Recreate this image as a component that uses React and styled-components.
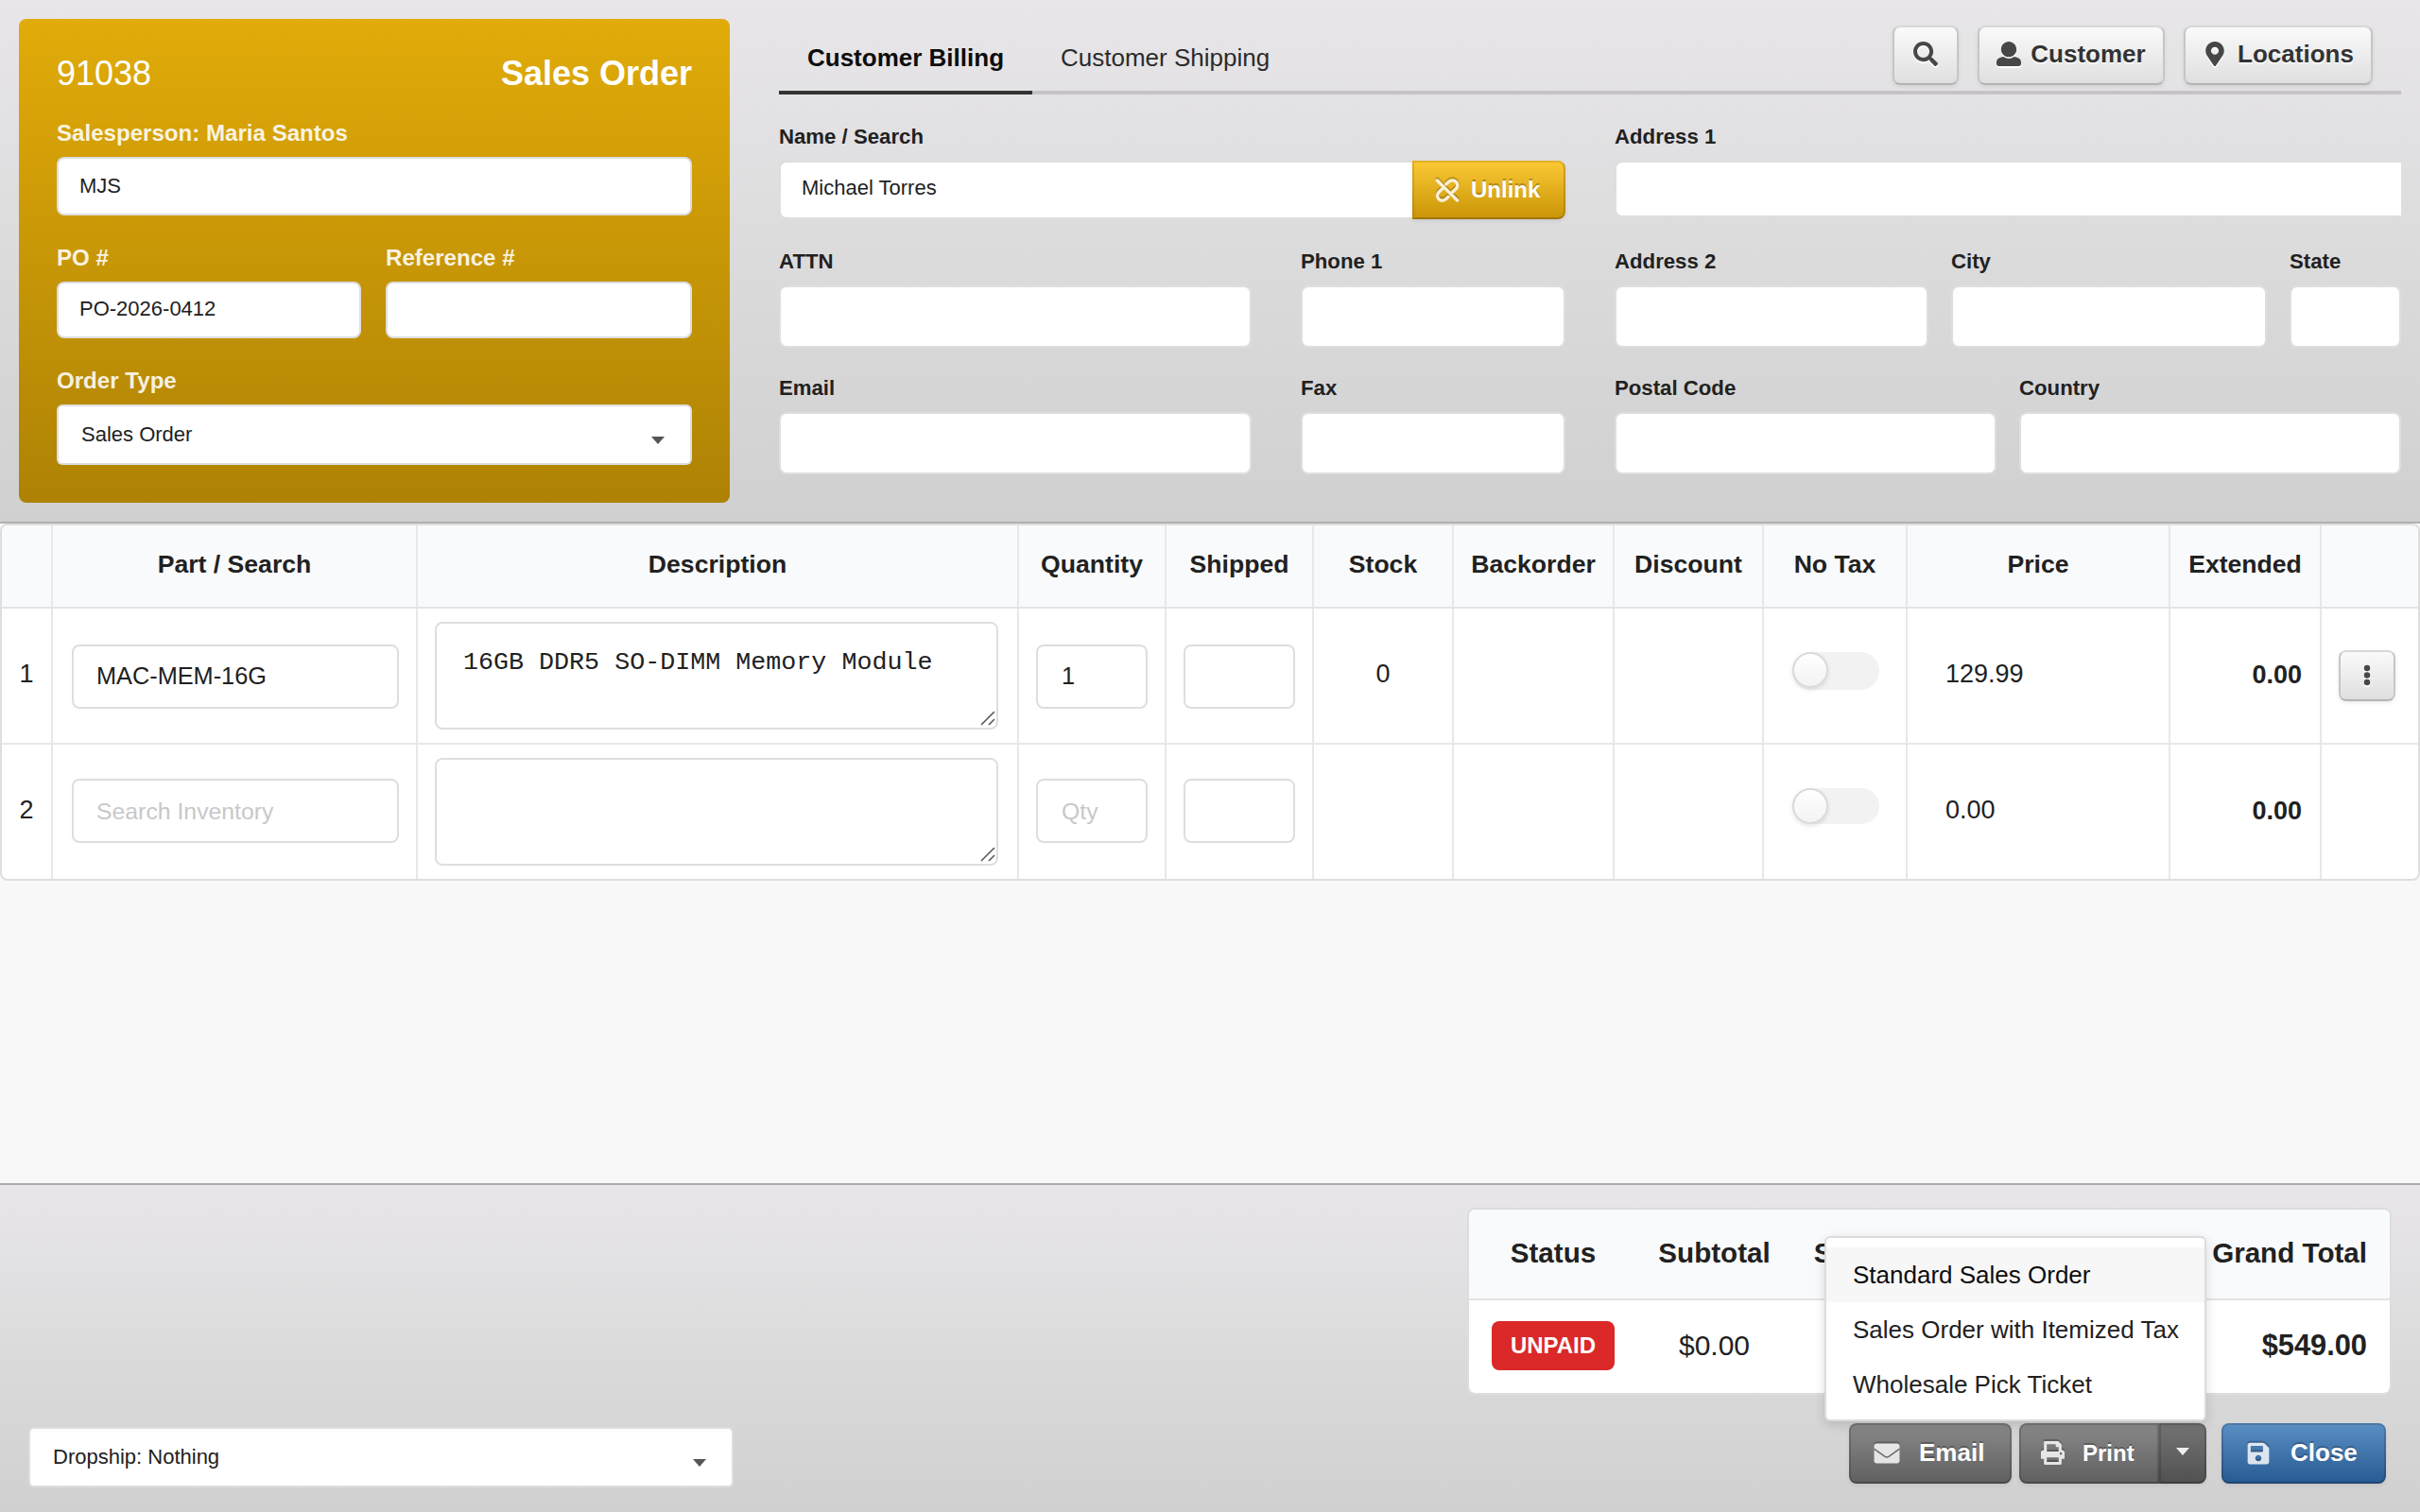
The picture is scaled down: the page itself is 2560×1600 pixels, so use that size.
import React from "react";
import styled, { createGlobalStyle, css } from "styled-components";
import { FaMapMarkerAlt, FaSave, FaSearch } from "react-icons/fa";

const GlobalStyle = createGlobalStyle`
  *, *::before, *::after {
    box-sizing: border-box;
  }

  body {
    margin: 0;
    background: #f8f8f8;
    color: #212121;
    font-family: "Liberation Sans", Helvetica, Arial, sans-serif;
  }
`;

const Page = styled.div`
  display: flex;
  flex-direction: column;
  width: 2560px;
  height: 1600px;
  overflow: hidden;
`;

/* ---------- header ---------- */

const Header = styled.header`
  display: flex;
  gap: 52px;
  height: 554px;
  padding: 0 20px;
  background: linear-gradient(#e8e6e9, #dcdbdc 50%, #d0d0d0);
  border-bottom: 2px solid #b0b0b0;
`;

const OrderCard = styled.section`
  width: 752px;
  height: 512px;
  margin-top: 20px;
  padding: 39px 40px 0;
  border-radius: 8px;
  background: linear-gradient(#e1ab09, #ae8205);
`;

const OrderTitle = styled.div`
  display: flex;
  justify-content: space-between;
  height: 37px;
  line-height: 37px;
  font-size: 36px;
  color: #fff;
`;

const Label = styled.div`
  height: ${(p) => (p.$short ? 68 : 70)}px;
  padding-top: ${(p) => (p.$short ? 17 : 19)}px;
  line-height: 51px;
  font-size: 22.2px;
  font-weight: bold;
  white-space: nowrap;

  ${OrderCard} & {
    font-size: 24.1px;
    color: rgba(255, 255, 255, 0.9);
  }
`;

const Input = styled.div`
  display: flex;
  align-items: center;
  flex: ${(p) => (p.$grow ? 1 : "none")};
  height: ${(p) => p.$height || 66}px;
  padding: 0 22px ${(p) => p.$lift || 0}px;
  background: #fff;
  border: 2px solid rgba(34, 36, 38, 0.15);
  border-radius: 8px;
  font-size: 22px;

  ${(p) =>
    p.$flatRight &&
    css`
      border-right: 0;
      border-radius: 8px 0 0 8px;
    `}
`;

const Split = styled.div`
  display: grid;
  grid-template-columns: ${(p) => p.$columns};
  column-gap: ${(p) => p.$gap}px;
`;

const Dropdown = styled.div`
  display: flex;
  align-items: center;
  justify-content: space-between;
  width: ${(p) => p.$width || "100%"};
  height: 64px;
  padding: 0 27px 0 24px;
  background: #fff;
  border: 2px solid rgba(34, 36, 38, 0.15);
  border-radius: 6px;
  font-size: 22px;
`;

const Caret = styled.span`
  width: 0;
  height: 0;
  margin-top: ${(p) => p.$drop || 0}px;
  border: 7px solid transparent;
  border-top: 8px solid ${(p) => p.$color || "#555"};
  border-bottom: 0;
`;

const CustomerArea = styled.section`
  flex: 1;
`;

const TabBar = styled.nav`
  display: flex;
  height: 100px;
  border-bottom: 4px solid #c5c3c6;
`;

const Tab = styled.div`
  height: 100px;
  padding: 35px 30px 0;
  line-height: 52px;
  font-size: 26px;
  font-weight: ${(p) => (p.$active ? "bold" : "normal")};
  color: ${(p) => (p.$active ? "#0d0d0d" : "#2b2b2b")};
  border-bottom: 4px solid ${(p) => (p.$active ? "#323433" : "transparent")};
`;

const Actions = styled.div`
  display: flex;
  gap: 20px;
  margin: 27px 30px 0 auto;
`;

const LightButton = styled.button`
  display: flex;
  align-items: center;
  justify-content: center;
  gap: ${(p) => p.$gap || 0}px;
  width: ${(p) => p.$width}px;
  height: ${(p) => p.$height || 63}px;
  padding: 0 0 3px;
  font-family: inherit;
  font-size: 26px;
  font-weight: bold;
  color: #333;
  background: linear-gradient(#fafafa, #dfdfdf);
  background-clip: padding-box;
  border: 2px solid #c6c6c6;
  border-top-color: #d8d8d8;
  border-bottom-color: #b4b4b4;
  border-radius: 8px;
  box-shadow: 0 2px 4px rgba(0, 0, 0, 0.08);
  text-shadow: 0 2px 0 #fff;

  svg {
    color: #474747;
    filter: drop-shadow(0 2px 0 #fff);
  }
`;

const Form = styled.div`
  display: grid;
  grid-template-columns: 832px 832px;
  grid-template-rows: 132px 136px 134px;
  column-gap: 52px;
`;

const InputGroup = styled.div`
  display: flex;
`;

const shaded = css`
  display: flex;
  align-items: center;
  font-family: inherit;
  font-weight: bold;
  color: #fff;
  text-shadow: 0 -2px 0 rgba(0, 0, 0, 0.25);

  svg {
    opacity: 0.82;
    filter: drop-shadow(0 -2px 0 rgba(0, 0, 0, 0.28));
  }
`;

const UnlinkButton = styled.button`
  ${shaded}
  width: 162px;
  height: 62px;
  padding: 0 0 1px 22px;
  gap: 12px;
  font-size: 24px;
  background: linear-gradient(#fcc935, #c89406) border-box;
  border: 2px solid rgba(140, 96, 0, 0.35);
  border-top-color: rgba(140, 96, 0, 0.22);
  border-bottom-color: rgba(140, 96, 0, 0.6);
  border-left-color: rgba(140, 96, 0, 0.25);
  border-radius: 0 8px 8px 0;
  box-shadow: 0 2px 4px rgba(0, 0, 0, 0.08);
`;

/* ---------- order lines ---------- */

const Body = styled.main`
  flex: 1;
`;

const Table = styled.div`
  height: 378px;
  background: #fff;
  border: 2px solid #dedede;
  border-radius: 8px;
  overflow: hidden;
`;

const Row = styled.div`
  display: grid;
  grid-template-columns: 52px 386px 636px 156px 156px 148px 170px 158px 152px 278px 160px 104px;
  height: 144px;
  border-bottom: 2px solid #e8e8e9;

  &:last-child {
    height: 142px;
    border-bottom: 0;
  }
`;

const Cell = styled.div`
  display: flex;
  align-items: center;
  justify-content: ${(p) => p.$align || "center"};
  padding: ${(p) => p.$pad || "0 0 4px"};
  font-size: 27px;
  font-weight: ${(p) => (p.$bold ? "bold" : "normal")};

  & + & {
    border-left: 2px solid #e7e8e8;
  }
`;

const HeadRow = styled(Row)`
  height: 88px;
  background: #f9fafb;
  border-bottom-color: #e2e3e4;

  ${Cell} {
    font-size: 26.6px;
  }
`;

const CellInput = styled.div`
  flex: 1;
  height: 68px;
  padding: ${(p) => (p.$muted ? 2 : 0)}px 0 0 ${(p) => p.$indent || 24}px;
  line-height: 62px;
  font-size: ${(p) => (p.$muted ? 24.8 : 25.3)}px;
  background: #fff;
  border: 2px solid #dedede;
  border-radius: 8px;
  color: ${(p) => (p.$muted ? "#c8c8c8" : "#212121")};
`;

const TextArea = styled.div`
  display: flex;
  justify-content: space-between;
  width: 596px;
  height: 114px;
  padding: 23px 1px 1px 28px;
  line-height: 36px;
  font-family: "Liberation Mono", "Courier New", monospace;
  font-size: 26.7px;
  white-space: pre;
  border: 2px solid #dedede;
  border-radius: 8px;

  svg {
    align-self: flex-end;
  }
`;

const Toggle = styled.div`
  width: 92px;
  height: ${(p) => p.$height}px;
  border-radius: 20px;
  background: #f2f2f2;

  &::before {
    content: "";
    display: block;
    width: 38px;
    height: 38px;
    border: 2px solid #dadada;
    border-radius: 50%;
    background: linear-gradient(#fff, #f3f3f3);
    box-shadow: 0 2px 4px rgba(34, 36, 38, 0.12);
  }
`;

/* ---------- footer ---------- */

const Footer = styled.footer`
  display: flex;
  justify-content: space-between;
  align-items: flex-end;
  height: 348px;
  padding: 24px 30px 26px;
  background: linear-gradient(#e8e6e9, #dcdbdc 50%, #d0d0d0);
  border-top: 2px solid #aeacb0;
`;

const FooterRight = styled.div`
  display: flex;
  flex-direction: column;
  justify-content: space-between;
  height: 100%;
  padding-bottom: 4px;
`;

const Totals = styled.div`
  width: 978px;
  height: 198px;
  background: #fff;
  background-clip: padding-box;
  border: 2px solid #dddcde;
  border-radius: 8px;
  overflow: hidden;
`;

const TotalsRow = styled.div`
  display: grid;
  grid-template-columns: 178px 163px 174px 1fr;
  align-items: center;
  justify-items: center;
  height: 98px;
  padding-bottom: 3px;
  font-size: 30px;
  font-weight: ${(p) => (p.$head ? "bold" : "normal")};

  ${(p) =>
    p.$head &&
    css`
      height: 96px;
      font-size: 29.6px;
      background: #f9fafb;
      border-bottom: 2px solid #e2e3e4;
    `}
`;

const GrandTotal = styled.strong`
  justify-self: end;
  padding-right: 24px;
  font-size: ${(p) => p.$size}px;
`;

const Badge = styled.span`
  width: 130px;
  height: 52px;
  line-height: 52px;
  text-align: center;
  font-size: 24px;
  font-weight: bold;
  color: #fff;
  background: #db2828;
  border-radius: 8px;
`;

const ButtonRow = styled.div`
  display: flex;
  justify-content: flex-end;
  padding-right: 6px;
`;

const tones = {
  grey: "linear-gradient(#8a8a8a, #5f5f5f)",
  dark: "linear-gradient(#757575, #505050)",
  blue: "linear-gradient(#5a8fc4, #265a92)",
};

const SolidButton = styled.button`
  ${shaded}
  width: ${(p) => p.$width}px;
  height: 64px;
  margin: 0;
  padding: 0 0 ${(p) => p.$lift ?? 1}px ${(p) => p.$indent}px;
  gap: ${(p) => p.$gap}px;
  font-size: ${(p) => p.$size || 26}px;
  background: ${(p) => tones[p.$tone]} border-box;
  border: 2px solid rgba(0, 0, 0, 0.15);
  border-bottom-color: rgba(0, 0, 0, 0.24);
  border-radius: ${(p) => p.$radius || "8px"};
  box-shadow: 0 2px 4px rgba(0, 0, 0, 0.07);
`;

const PrintGroup = styled.div`
  position: relative;
  display: flex;
  margin: 0 16px 0 8px;
`;

const Menu = styled.div`
  position: absolute;
  right: 0;
  bottom: calc(100% + 2px);
  width: 404px;
  height: 196px;
  padding: 10px 0 8px;
  background: #fff;
  border: 2px solid #dcdcde;
  border-radius: 6px;
  box-shadow: 0 4px 12px rgba(34, 36, 38, 0.16);
`;

const MenuItem = styled.div`
  height: 58px;
  padding-left: 28px;
  line-height: 58px;
  font-size: 26px;
  white-space: nowrap;
  color: ${(p) => (p.$active ? "#0d0d0d" : "#212121")};
  background: ${(p) => (p.$active ? "#f7f7f7" : "transparent")};
`;

/* ---------- icons ---------- */

const UserIcon = () => (
  <svg width="26" height="26" viewBox="0 0 512 512" fill="currentColor">
    <path d="M256 0c88.4 0 160 71.600 160 160s-71.600 160-160 160S96 248.400 96 160 167.600 0 256 0zm183.300 333.800l-71.300-17.800c-74.900 53.900-165.700 41.900-224 0l-71.300 17.800C30 344.500 0 382.900 0 427v37c0 26.500 21.500 48 48 48h416c26.500 0 48-21.500 48-48v-37c0-44.100-30-82.500-72.700-93.200z" />
  </svg>
);

const UnlinkIcon = () => (
  <svg
    width="26"
    height="26"
    viewBox="0 0 26 26"
    fill="none"
    stroke="currentColor"
    strokeWidth="3.4"
    strokeLinecap="round"
  >
    <path d="M2.400 3L23.600 24" />
    <path d="M11.800 6.800L14.400 4.600C16.800 2.300 20.200 2.300 22.200 4.400s2 5.200 0 7.400L18.200 15.600" />
    <path d="M7.800 11.600L4.200 15.200c-2.200 2.200-2.200 5.200-0.200 7.400s5.400 2.200 7.600 0L14 20.200" />
  </svg>
);

const MailIcon = () => (
  <svg width="28" height="22" viewBox="0 0 28 22">
    <rect x="0.500" y="0.500" width="27" height="21" rx="3" fill="currentColor" />
    <path
      d="M0.500 6.200L12 14.400Q14 15.600 16 14.400L27.500 6.200"
      fill="none"
      stroke="#6a6a6a"
      strokeWidth="1.500"
    />
  </svg>
);

const PrintIcon = () => (
  <svg width="25" height="25" viewBox="0 0 512 512" fill="currentColor">
    <path d="M464 192h-16V81.941a24 24 0 0 0-7.029-16.970L383.029 7.029A24 24 0 0 0 366.059 0H88C74.745 0 64 10.745 64 24v168H48c-26.510 0-48 21.490-48 48v132c0 6.627 5.373 12 12 12h52v104c0 13.255 10.745 24 24 24h336c13.255 0 24-10.745 24-24V384h52c6.627 0 12-5.373 12-12V240c0-26.510-21.490-48-48-48zm-80 256H128v-96h256v96zM384 224H128V64h192v48c0 8.837 7.163 16 16 16h48v96zm48 72c-13.255 0-24-10.745-24-24s10.745-24 24-24 24 10.745 24 24-10.745 24-24 24z" />
  </svg>
);

const DotsIcon = () => (
  <svg width="8" height="24" viewBox="0 0 8 24" fill="currentColor">
    <circle cx="4" cy="5" r="3.200" />
    <circle cx="4" cy="12.500" r="3.200" />
    <circle cx="4" cy="20" r="3.200" />
  </svg>
);

const ResizeGrip = () => (
  <svg width="16" height="16" viewBox="0 0 16 16" stroke="#555" strokeWidth="1.500">
    <path d="M1 14L15 0M9 14L15 8" />
  </svg>
);

const columns = [
  "",
  "Part / Search",
  "Description",
  "Quantity",
  "Shipped",
  "Stock",
  "Backorder",
  "Discount",
  "No Tax",
  "Price",
  "Extended",
  "",
];

const lines = [
  {
    part: "MAC-MEM-16G",
    description: "16GB DDR5 SO-DIMM Memory Module",
    quantity: "1",
    stock: "0",
    price: "129.99",
    extended: "0.00",
    saved: true,
  },
  { price: "0.00", extended: "0.00" },
];

function Field({ label, height, short, flatRight }) {
  return (
    <div>
      <Label $short={short}>{label}</Label>
      <Input $height={height} $flatRight={flatRight} />
    </div>
  );
}

function OrderLine({ number, line }) {
  // a blank line shows placeholders and sits slightly higher
  const blank = !line.saved;
  const inputPad = blank ? "0 18px 2px" : "2px 18px 0";

  return (
    <Row>
      <Cell>{number}</Cell>
      <Cell $pad={blank ? "0 18px 2px 20px" : "2px 18px 0 20px"}>
        <CellInput $muted={blank}>{line.part || "Search Inventory"}</CellInput>
      </Cell>
      <Cell $align="flex-start" $pad="0 0 0 18px">
        <TextArea>
          <span>{line.description}</span>
          <ResizeGrip />
        </TextArea>
      </Cell>
      <Cell $pad={inputPad}>
        <CellInput $muted={blank} $indent={25}>
          {line.quantity || "Qty"}
        </CellInput>
      </Cell>
      <Cell $pad={inputPad}>
        <CellInput />
      </Cell>
      <Cell>{line.stock}</Cell>
      <Cell />
      <Cell />
      <Cell $pad={blank ? "0 0 12px 1px" : "0 0 10px 1px"}>
        <Toggle $height={blank ? 38 : 40} />
      </Cell>
      <Cell $align="flex-start" $pad="0 0 4px 40px">
        {line.price}
      </Cell>
      <Cell $align="flex-end" $pad="0 19px 1px 0" $bold>
        {line.extended}
      </Cell>
      <Cell $align="flex-start" $pad="0 0 0 18px">
        {line.saved && (
          <LightButton $width={60} $height={54}>
            <DotsIcon />
          </LightButton>
        )}
      </Cell>
    </Row>
  );
}

function App() {
  return (
    <Page>
      <GlobalStyle />

      <Header>
        <OrderCard>
          <OrderTitle>
            <span>91038</span>
            <strong>Sales Order</strong>
          </OrderTitle>
          <Label>Salesperson: Maria Santos</Label>
          <Input $height={62} $lift={1}>
            MJS
          </Input>
          <Split $columns="322px 324px" $gap={26}>
            <div>
              <Label>PO #</Label>
              <Input $height={60} $lift={3}>
                PO-2026-0412
              </Input>
            </div>
            <Field label="Reference #" height={60} />
          </Split>
          <Label>Order Type</Label>
          <Dropdown>
            Sales Order
            <Caret $drop={12} />
          </Dropdown>
        </OrderCard>

        <CustomerArea>
          <TabBar>
            <Tab $active>Customer Billing</Tab>
            <Tab>Customer Shipping</Tab>
            <Actions>
              <LightButton $width={70}>
                <FaSearch size={26} />
              </LightButton>
              <LightButton $width={198} $gap={10}>
                <UserIcon />
                Customer
              </LightButton>
              <LightButton $width={200} $gap={11}>
                <FaMapMarkerAlt size={26} />
                Locations
              </LightButton>
            </Actions>
          </TabBar>

          <Form>
            <div>
              <Label>Name / Search</Label>
              <InputGroup>
                <Input $grow $height={62} $lift={5} $flatRight>
                  Michael Torres
                </Input>
                <UnlinkButton>
                  <UnlinkIcon />
                  Unlink
                </UnlinkButton>
              </InputGroup>
            </div>
            <Field label="Address 1" height={60} flatRight />

            <Split $columns="500px 280px" $gap={52}>
              <Field label="ATTN" />
              <Field label="Phone 1" />
            </Split>
            <Split $columns="332px 334px 118px" $gap={24}>
              <Field label="Address 2" />
              <Field label="City" />
              <Field label="State" />
            </Split>

            <Split $columns="500px 280px" $gap={52}>
              <Field label="Email" short />
              <Field label="Fax" short />
            </Split>
            <Split $columns="404px 404px" $gap={24}>
              <Field label="Postal Code" short />
              <Field label="Country" short />
            </Split>
          </Form>
        </CustomerArea>
      </Header>

      <Body>
        <Table>
          <HeadRow>
            {columns.map((name, i) => (
              <Cell key={i} $bold>
                {name}
              </Cell>
            ))}
          </HeadRow>
          {lines.map((line, i) => (
            <OrderLine key={i} number={i + 1} line={line} />
          ))}
        </Table>
      </Body>

      <Footer>
        <Dropdown $width="746px">
          Dropship: Nothing
          <Caret $drop={12} />
        </Dropdown>

        <FooterRight>
          <Totals>
            <TotalsRow $head>
              <span>Status</span>
              <span>Subtotal</span>
              <span>Shipping</span>
              <GrandTotal>Grand Total</GrandTotal>
            </TotalsRow>
            <TotalsRow>
              <Badge>UNPAID</Badge>
              <span>$0.00</span>
              <span />
              <GrandTotal $size={30.8}>$549.00</GrandTotal>
            </TotalsRow>
          </Totals>

          <ButtonRow>
            <SolidButton $tone="grey" $width={172} $indent={24} $gap={20}>
              <MailIcon />
              Email
            </SolidButton>
            <PrintGroup>
              <SolidButton
                $tone="grey"
                $width={148}
                $indent={21}
                $gap={19}
                $size={24}
                $radius="8px 0 0 8px"
              >
                <PrintIcon />
                Print
              </SolidButton>
              <SolidButton
                $tone="dark"
                $width={50}
                $indent={16}
                $lift={4}
                $radius="0 8px 8px 0"
              >
                <Caret $color="#eee" />
              </SolidButton>
              <Menu>
                <MenuItem $active>Standard Sales Order</MenuItem>
                <MenuItem>Sales Order with Itemized Tax</MenuItem>
                <MenuItem>Wholesale Pick Ticket</MenuItem>
              </Menu>
            </PrintGroup>
            <SolidButton $tone="blue" $width={174} $indent={24} $gap={21}>
              <FaSave size={26} />
              Close
            </SolidButton>
          </ButtonRow>
        </FooterRight>
      </Footer>
    </Page>
  );
}

export default App;
